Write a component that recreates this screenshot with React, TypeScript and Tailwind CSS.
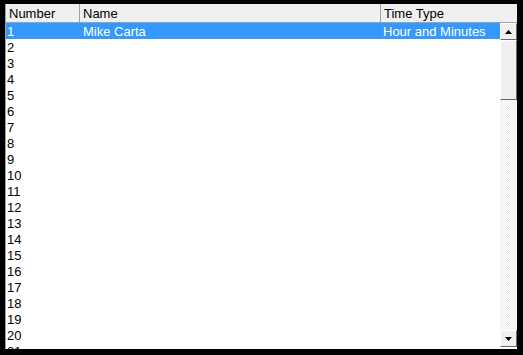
import React from 'react';

const rows = Array.from({ length: 21 }, (_, i) => i + 1);

function Arrow({ up }: { up?: boolean }) {
  return (
    <svg width="7" height="4" viewBox="0 0 7 4">
      {up ? <polygon points="3.5,0 7,4 0,4" fill="#000" /> : <polygon points="0,0 7,0 3.5,4" fill="#000" />}
    </svg>
  );
}

function ScrollButton({ up }: { up?: boolean }) {
  return (
    <div className="h-[17px] w-full bg-[#f0f0f0] border border-t-white border-l-white border-r-[#696969] border-b-[#696969] flex items-center justify-center">
      <Arrow up={up} />
    </div>
  );
}

export default function App() {
  return (
    <div className="w-[523px] h-[355px] bg-black pl-[5px] pt-[4px] pr-[6px] pb-[6px] overflow-hidden" style={{ fontFamily: '"Liberation Sans", Arial, sans-serif' }}>
      <div className="w-full h-full bg-white flex flex-col border-l border-[#a0a0a0] overflow-hidden">
        {/* Header */}
        <div className="flex h-[19px] shrink-0 bg-[#f0f0f0] border-b border-[#a0a0a0] text-[13px] leading-[19px] text-black">
          <div className="w-[74px] pl-[3px] border-r border-[#a0a0a0]">Number</div>
          <div className="w-[301px] pl-[3px] border-r border-[#a0a0a0]">Name</div>
          <div className="flex-1 pl-[3px]">Time Type</div>
        </div>
        {/* Body */}
        <div className="flex flex-1 min-h-0">
          <div className="flex-1 overflow-hidden">
            {rows.map((n) => (
              <div
                key={n}
                className={`flex h-[16px] text-[13px] leading-[17px] ${n === 1 ? 'bg-[#3399ff] text-white' : 'text-black'}`}
              >
                <div className="w-[75px] pl-[1px]">{n}</div>
                <div className="w-[301px] pl-[2px]">{n === 1 ? 'Mike Carta' : ''}</div>
                <div className="flex-1 pl-[1px] whitespace-nowrap">{n === 1 ? 'Hour and Minutes' : ''}</div>
              </div>
            ))}
          </div>
          {/* Scrollbar */}
          <div className="w-[17px] flex flex-col mb-[2px]">
            <ScrollButton up />
            <div className="h-[60px] bg-[#f0f0f0] border border-t-white border-l-white border-r-[#696969] border-b-[#696969]" />
            <div className="flex-1 bg-[repeating-conic-gradient(#ffffff_0%_25%,#ececec_0%_50%)] bg-size-[2px_2px]" />
            <ScrollButton />
          </div>
        </div>
      </div>
    </div>
  );
}
